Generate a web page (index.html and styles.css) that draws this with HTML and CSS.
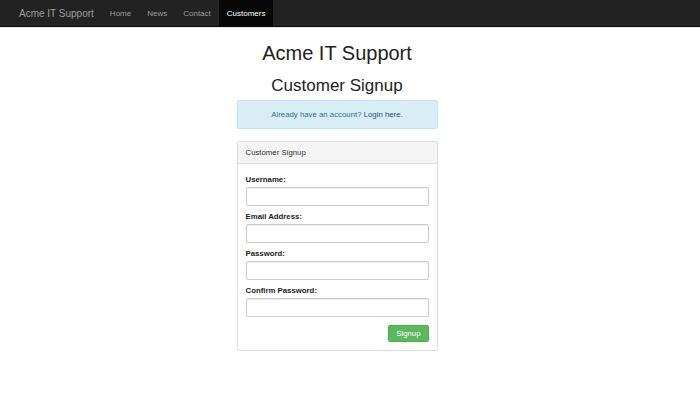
FILE: index.html
```html
<!DOCTYPE html>
<html lang="en">
<head>
  <meta charset="UTF-8">
  <meta name="viewport" content="width=device-width, initial-scale=1.0">
  <title>Customer Signup</title>
  <link rel="stylesheet" href="styles.css">
</head>
<body>

  <!-- Barra de navegação -->
  <nav class="navbar">
    <a class="brand" href="#">Acme IT Support</a>
    <ul class="nav">
      <li><a href="#">Home</a></li>
      <li><a href="#">News</a></li>
      <li><a href="#">Contact</a></li>
      <li class="active"><a href="#">Customers</a></li>
    </ul>
  </nav>

  <div class="page">
    <div class="column">
      <h1 class="title">Acme IT Support</h1>
      <h2 class="subtitle">Customer Signup</h2>

      <div class="alert">
        Already have an account? <a href="#">Login here.</a>
      </div>

      <!-- Formulário de cadastro -->
      <div class="panel">
        <div class="panel-heading">Customer Signup</div>
        <form class="panel-body">
          <div class="form-group">
            <label for="username">Username:</label>
            <input type="text" id="username">
          </div>
          <div class="form-group">
            <label for="email">Email Address:</label>
            <input type="email" id="email">
          </div>
          <div class="form-group">
            <label for="password">Password:</label>
            <input type="password" id="password">
          </div>
          <div class="form-group">
            <label for="confirm">Confirm Password:</label>
            <input type="password" id="confirm">
          </div>
          <div class="actions">
            <button type="submit" class="btn-success">Signup</button>
          </div>
        </form>
      </div>
    </div>
  </div>

</body>
</html>
```

FILE: styles.css
```css
body {
  font-family: "Liberation Sans", Arial, sans-serif;
  font-size: 7.8px;
  line-height: 11px;
  color: #333;
  background-color: #fff;
  margin: 0;
  padding: 0;
}

a {
  text-decoration: none;
}

.navbar {
  display: flex;
  align-items: stretch;
  height: 26px;
  background-color: #222;
  border-bottom: 1px solid #080808;
  box-shadow: 0 1px 0 #e6e6e6;
}

.brand {
  display: flex;
  align-items: center;
  padding: 0 8px 0 19px;
  font-size: 10px;
  color: #9d9d9d;
}

.nav {
  display: flex;
  list-style: none;
  margin: 0;
  padding: 0;
  font-size: 8px;
}

.nav li a {
  display: flex;
  align-items: center;
  height: 100%;
  padding: 0 8px;
  color: #9d9d9d;
}

.nav li.active a {
  background-color: #080808;
  color: #fff;
}

.page {
  padding-right: 26px;
}

.column {
  width: 201px;
  margin: 0 auto;
}

.title {
  font-size: 20px;
  font-weight: normal;
  line-height: 22px;
  text-align: center;
  white-space: nowrap;
  margin: 15px -60px 12px;
  color: #222;
}

.subtitle {
  font-size: 17px;
  font-weight: normal;
  line-height: 19px;
  text-align: center;
  white-space: nowrap;
  margin: 0 -40px 5px;
  color: #222;
}

.alert {
  background-color: #d9edf7;
  border: 1px solid #bce8f1;
  border-radius: 2px;
  color: #31708f;
  text-align: center;
  padding: 8px;
  margin-bottom: 12px;
}

.alert a {
  color: #245269;
}

.panel {
  border: 1px solid #ddd;
  border-radius: 2px;
  box-shadow: 0 1px 1px rgba(0, 0, 0, 0.05);
}

.panel-heading {
  background-color: #f5f5f5;
  border-bottom: 1px solid #ddd;
  padding: 5px 8px;
  color: #333;
}

.panel-body {
  padding: 10px 8px 8px;
  margin: 0;
}

.form-group {
  margin-bottom: 5px;
}

.form-group label {
  display: block;
  font-weight: bold;
  color: #222;
  margin-bottom: 2px;
}

.form-group input {
  display: block;
  box-sizing: border-box;
  width: 100%;
  height: 19px;
  border: 1px solid #ccc;
  border-radius: 2px;
  box-shadow: inset 0 1px 1px rgba(0, 0, 0, 0.075);
  padding: 3px 6px;
  font-size: 7.8px;
  font-family: inherit;
}

.actions {
  display: flex;
  justify-content: flex-end;
  padding-top: 3px;
}

.btn-success {
  background-color: #5cb85c;
  border: 1px solid #4cae4c;
  border-radius: 2px;
  color: #fff;
  font-family: inherit;
  font-size: 7.8px;
  height: 17px;
  padding: 0 7px;
}
```
